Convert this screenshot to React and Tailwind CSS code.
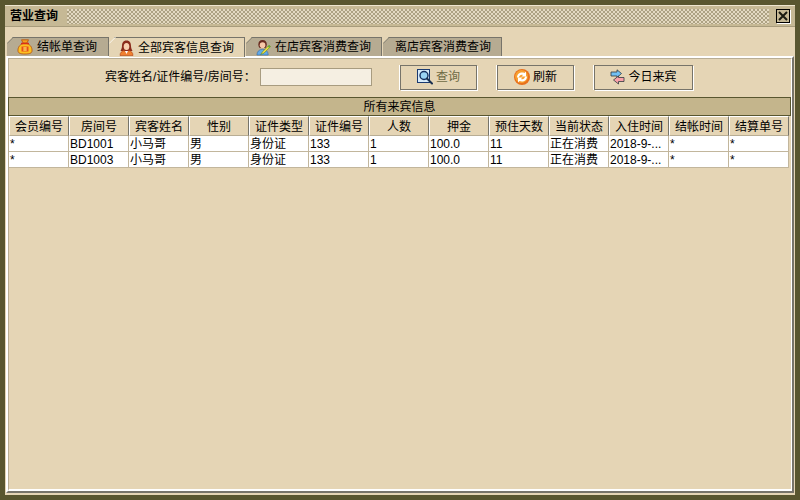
const headers = ["会员编号","房间号","宾客姓名","性别","证件类型","证件编号","人数","押金","预住天数","当前状态","入住时间","结帐时间","结算单号"];
const rows = [
  ["*","BD1001","小马哥","男","身份证","133","1","100.0","11","正在消费","2018-9-...","*","*"],
  ["*","BD1003","小马哥","男","身份证","133","1","100.0","11","正在消费","2018-9-...","*","*"],
];

const Bag = () => (
  <svg width="16" height="16" viewBox="0 0 16 16">
    <path d="M4.500.8h7L10 4H6z" fill="#f7a020" stroke="#b8500a" strokeWidth="0.8" />
    <path d="M6 4.500C2 6 .8 9 1 12c.2 2 2 3 7 3s6.800-1 7-3c.2-3-1-6-5-7.500z" fill="#fcc020" stroke="#b8500a" strokeWidth="0.8" />
    <rect x="4" y="3.800" width="8" height="1.500" fill="#d9301a" />
    <rect x="4.500" y="7.500" width="7" height="5" fill="#e8501a" />
    <path d="M6 9h4M6 11h4M8 8v4" stroke="#ffe060" strokeWidth="0.9" />
  </svg>
);
const Woman = () => (
  <svg width="15" height="16" viewBox="0 0 15 16">
    <path d="M7.500.5C4 .5 3 3 3 6c0 2-1 4-1.500 5h12C13 10 12 8 12 6c0-3-1-5.500-4.500-5.500z" fill="#8a2c1c" />
    <ellipse cx="7.500" cy="6.500" rx="2.800" ry="3.500" fill="#f8d0b0" />
    <path d="M1 15.500c0-3 2-4.500 4-5l2.500 2 2.500-2c2 .5 4 2 4 5z" fill="#f08030" stroke="#b04010" strokeWidth="0.6" />
    <path d="M6 11l1.500 3 1.500-3z" fill="#fff" />
  </svg>
);
const Agent = () => (
  <svg width="15" height="17" viewBox="0 0 16 17">
    <path d="M7 .5C4 .5 2.500 2.500 2.500 5c0 2 .5 3 1.500 4h6c1-1 1.500-2 1.500-4 0-2.500-1.500-4.500-4.500-4.500z" fill="#6a2c20" />
    <ellipse cx="7" cy="6" rx="3" ry="3" fill="#f8c8a8" />
    <path d="M1 16.500c0-3.500 2-6 6-6s6 2.500 6 6z" fill="#60a8e8" stroke="#3068a8" strokeWidth="0.6" />
    <path d="M5 16l2-3 7-7 1.500 1.500-7 7z" fill="#f8e040" stroke="#508020" strokeWidth="0.6" />
    <path d="M12.500 7.500l1.500 1.500 1.500-1.500L14 6z" fill="#60b030" />
  </svg>
);
const Search = () => (
  <svg width="16" height="16" viewBox="0 0 16 16">
    <rect x="0.500" y="0.500" width="12" height="13" fill="#d8ecfa" stroke="#1a3a70" />
    <circle cx="7" cy="6.500" r="4" fill="#9ad4f4" stroke="#163060" strokeWidth="1.400" />
    <path d="M10 9.500l5 5" stroke="#1a3050" strokeWidth="2" strokeLinecap="round" />
  </svg>
);
const Refresh = () => (
  <svg width="16" height="16" viewBox="0 0 16 16">
    <circle cx="8" cy="8" r="8" fill="#e8701c" />
    <circle cx="7.500" cy="7.500" r="6.500" fill="#f8a030" />
    <path d="M3 8.500C3 4.500 7 2.500 10.500 4L12 2.500v5H7.500L9 6C7 5.300 5.300 6.300 5 8.500z" fill="#fff" />
    <path d="M13 7.500c0 4-4 6-7.500 4.500L4 13.500v-5h4.500L7 10c2 .7 3.700-.3 4-2.500z" fill="#fff" />
  </svg>
);
const Swap = () => (
  <svg width="15" height="16" viewBox="0 0 15 16">
    <path d="M1 7V3h6V.8L11.500 4.500 7 8.500V7z" fill="#70c0f4" stroke="#303840" strokeWidth="0.8" />
    <path d="M14 8.500v4H8.500V15L3.500 11 8.500 7v1.500z" fill="#f8a0a8" stroke="#303840" strokeWidth="0.8" />
  </svg>
);

const Btn = ({ w, icon, label, muted }) => (
  <div className={`${w} h-[25px] flex items-center justify-center gap-[3px] border border-[#77746a] shadow-[1px_1px_0_#ffffff,-1px_0_0_#ffffff] ${muted ? "text-[#6e6a44]" : "text-black"}`}>
    {icon}
    <span>{label}</span>
  </div>
);

const Tab = ({ w, active, icon, label, ml = "", pl = "pl-[10px]" }) => (
  <div
    className={`relative ${w} ${ml} ${pl} ${active ? "h-[20px] bg-[#e5d5b5] z-10" : "h-[19px] bg-[#b6ab92]"} flex items-center gap-1 border-t border-r border-[#77746a] [clip-path:polygon(6px_0,100%_0,100%_100%,0_100%,0_6px)]`}
  >
    {icon}
    <span className="whitespace-nowrap">{label}</span>
    <svg className="absolute left-0 top-[-1px]" width="7" height="7" viewBox="0 0 7 7"><path d="M6.500 0L0 6.500" stroke={active ? "#ffffff" : "#77746a"} /></svg>
  </div>
);

export default function App() {
  return (
    <div className="w-[800px] h-[500px] overflow-hidden bg-[#59562f] p-[5px] text-[12px] leading-[14px] text-black [font-family:'Liberation_Sans','Noto_Sans_CJK_SC',sans-serif]">
      <div className="h-full flex flex-col bg-[#e5d5b5]">
        {/* title bar */}
        <div className="h-[22px] shrink-0 flex items-center bg-[#c6b995] pl-[5px] pr-[5px] border-b border-[#a89c7c] border-t border-t-[#efe6d0]">
          <span className="font-bold w-[57px] shrink-0">营业查询</span>
          <div className="flex-1 h-[15px] mr-[7px] [background:radial-gradient(circle_at_1px_1px,#e4dac2_1px,transparent_1px)_0_0/4px_4px,radial-gradient(circle_at_1px_1px,#e4dac2_1px,transparent_1px)_2px_2px/4px_4px,#ada283]" />
          <div className="w-[14px] h-[14px] flex items-center justify-center bg-[#c6b995] border border-black shadow-[1px_1px_0_#fff]">
            <svg width="10" height="10" viewBox="0 0 10 10"><path d="M1 1l8 8M9 1l-8 8" stroke="#1a1a10" strokeWidth="2" /></svg>
          </div>
        </div>
        {/* tabs */}
        <div className="flex items-start h-[19px] mt-[10px] ml-[2px] shrink-0 relative z-10">
          <Tab w="w-[102px]" icon={<Bag />} label="结帐单查询" />
          <Tab w="w-[136px]" active icon={<Woman />} label="全部宾客信息查询" />
          <Tab w="w-[136px]" ml="ml-px" icon={<Agent />} label="在店宾客消费查询" />
          <Tab w="w-[119px]" ml="ml-px" pl="pl-[12px]" label="离店宾客消费查询" />
        </div>
        {/* panel */}
        <div className="flex-1 min-h-0 ml-px mr-px mb-[2px] flex flex-col border-t-2 border-l-2 border-white border-r-2 border-r-[#77746a] border-b-2 border-b-[#77746a] bg-[#e5d5b5]">
          <div className="flex-1 min-h-0 flex flex-col border-t border-l border-[#b8ad94] border-r border-r-white border-b-2 border-b-white">
            <div className="h-[38px] shrink-0 flex items-center pb-[2px]">
              <span className="ml-[96px] w-[155px] shrink-0 whitespace-nowrap">宾客姓名/证件编号/房间号：</span>
              <div className="w-[112px] h-[18px] bg-[#f5efe2] border border-[#a89c80] shrink-0" />
              <div className="ml-7 flex items-center gap-5">
                <Btn w="w-[77px]" icon={<Search />} label="查询" muted />
                <Btn w="w-[77px]" icon={<Refresh />} label="刷新" />
                <Btn w="w-[99px]" icon={<Swap />} label="今日来宾" />
              </div>
            </div>
            <div className="-ml-px h-[19px] shrink-0 flex items-center justify-center pt-px bg-[#c4b58c] border border-[#59562f]">所有来宾信息</div>
            <div className="grid grid-cols-[repeat(13,60px)] w-[780px]">
              {headers.map((h) => (
                <div key={h} className="h-[20px] flex items-center justify-center pt-px bg-[#e5d5b5] border-r border-[#77746a] border-l border-l-white border-t border-t-white border-b border-b-[#b8ad94] whitespace-nowrap">{h}</div>
              ))}
              {rows.flatMap((r, i) =>
                r.map((c, j) => (
                  <div key={`${i}-${j}`} className="h-[16px] bg-white pl-px pt-px border-r border-b border-[#c2b69c] whitespace-nowrap overflow-hidden text-black">{c}</div>
                ))
              )}
            </div>
          </div>
        </div>
      </div>
    </div>
  );
}
